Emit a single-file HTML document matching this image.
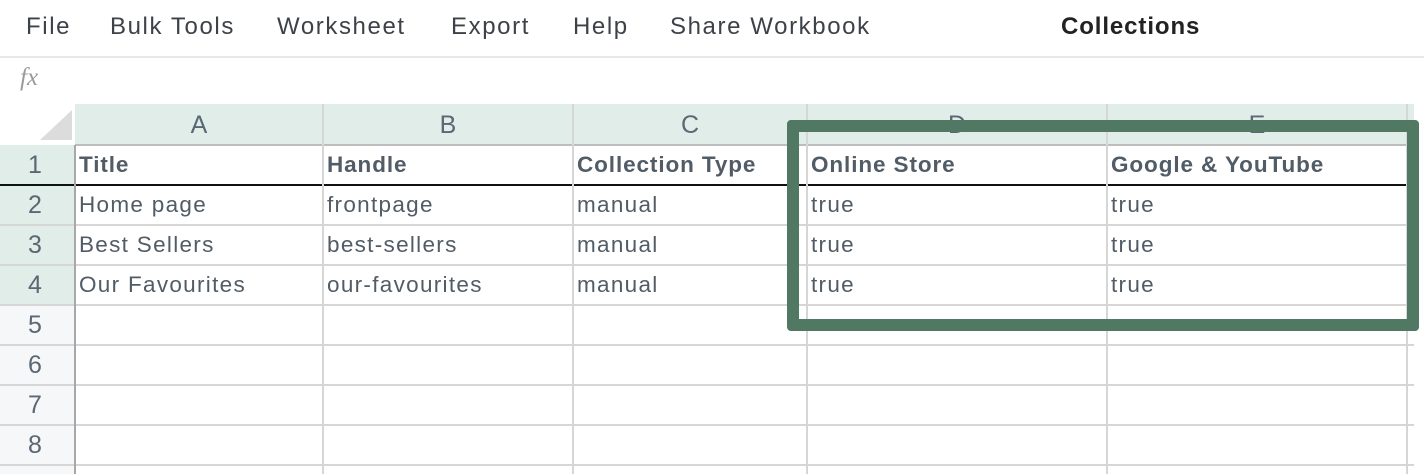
<!DOCTYPE html>
<html><head><style>
body{margin:0;width:1424px;height:474px;overflow:hidden;background:#fff;font-family:"Liberation Sans",sans-serif;position:relative}
.a{position:absolute;white-space:nowrap}
.m{top:12px;font-size:24px;color:#3d4249;line-height:30px;letter-spacing:1.6px}
.h{position:absolute;background:#d6d6d6;height:2px}
.v{position:absolute;background:#d6d6d6;width:2px}
.c{font-size:22.5px;color:#515c66;line-height:40px;letter-spacing:1.3px}
.b{font-weight:bold;letter-spacing:0.9px}
.rn{position:absolute;left:0;width:70px;text-align:center;font-size:25px;color:#5a6774;line-height:40px}
.cl{position:absolute;top:105px;text-align:center;font-size:25px;color:#5a6774;line-height:40px}
</style></head><body>
<div class="a m" style="left:26px">File</div>
<div class="a m" style="left:110px">Bulk Tools</div>
<div class="a m" style="left:277px">Worksheet</div>
<div class="a m" style="left:451px">Export</div>
<div class="a m" style="left:573px">Help</div>
<div class="a m" style="left:670px">Share Workbook</div>
<div class="a m" style="left:1061px;color:#222;font-weight:bold;letter-spacing:0.9px">Collections</div>
<div class="a" style="left:0;top:56px;width:1424px;height:2px;background:#e8e8ec"></div>
<div class="a" style="left:20px;top:64px;font-family:'Liberation Serif',serif;font-style:italic;font-size:25px;color:#9a9a9a">fx</div>
<div class="a" style="left:0;top:104px;width:1414px;height:41px;background:#e1ede8"></div>
<div class="a" style="left:0;top:104px;width:75px;height:41px;background:#fff"></div>
<div class="a" style="left:0;top:145px;width:74px;height:160px;background:#e1ede8"></div>
<div class="a" style="left:0;top:305px;width:74px;height:169px;background:#f5f7f9"></div>
<svg class="a" style="left:40px;top:110px" width="32" height="30"><polygon points="32,0 32,30 0,30" fill="#dcdcdc"/></svg>
<div class="cl" style="left:75px;width:248px">A</div>
<div class="cl" style="left:323px;width:250px">B</div>
<div class="cl" style="left:573px;width:234px">C</div>
<div class="cl" style="left:807px;width:300px">D</div>
<div class="cl" style="left:1107px;width:300px">E</div>
<div class="h" style="left:75px;top:144px;width:1340px;background:#bdbdbd"></div>
<div class="a" style="left:0;top:184px;width:1414px;height:2px;background:#111"></div>
<div class="h" style="left:0;top:224px;width:1414px"></div>
<div class="h" style="left:0;top:264px;width:1414px"></div>
<div class="h" style="left:0;top:304px;width:1414px"></div>
<div class="h" style="left:0;top:344px;width:1414px"></div>
<div class="h" style="left:0;top:384px;width:1414px"></div>
<div class="h" style="left:0;top:424px;width:1414px"></div>
<div class="h" style="left:0;top:464px;width:1414px"></div>
<div class="v" style="left:74px;top:145px;height:329px;background:#a8a8a8"></div>
<div class="v" style="left:322px;top:104px;height:370px"></div>
<div class="v" style="left:572px;top:104px;height:370px"></div>
<div class="v" style="left:806px;top:104px;height:370px"></div>
<div class="v" style="left:1106px;top:104px;height:370px"></div>
<div class="v" style="left:1406px;top:104px;height:370px"></div>
<div class="rn" style="top:145px">1</div>
<div class="rn" style="top:185px">2</div>
<div class="rn" style="top:225px">3</div>
<div class="rn" style="top:265px">4</div>
<div class="rn" style="top:305px">5</div>
<div class="rn" style="top:345px">6</div>
<div class="rn" style="top:385px">7</div>
<div class="rn" style="top:425px">8</div>
<div class="a c b" style="left:79px;top:145px">Title</div>
<div class="a c b" style="left:327px;top:145px">Handle</div>
<div class="a c b" style="left:577px;top:145px">Collection Type</div>
<div class="a c b" style="left:811px;top:145px">Online Store</div>
<div class="a c b" style="left:1111px;top:145px">Google &amp; YouTube</div>
<div class="a c" style="left:79px;top:185px">Home page</div>
<div class="a c" style="left:327px;top:185px">frontpage</div>
<div class="a c" style="left:577px;top:185px">manual</div>
<div class="a c" style="left:811px;top:185px">true</div>
<div class="a c" style="left:1111px;top:185px">true</div>
<div class="a c" style="left:79px;top:225px">Best Sellers</div>
<div class="a c" style="left:327px;top:225px">best-sellers</div>
<div class="a c" style="left:577px;top:225px">manual</div>
<div class="a c" style="left:811px;top:225px">true</div>
<div class="a c" style="left:1111px;top:225px">true</div>
<div class="a c" style="left:79px;top:265px">Our Favourites</div>
<div class="a c" style="left:327px;top:265px">our-favourites</div>
<div class="a c" style="left:577px;top:265px">manual</div>
<div class="a c" style="left:811px;top:265px">true</div>
<div class="a c" style="left:1111px;top:265px">true</div>
<div class="a" style="left:787px;top:120px;width:608px;height:187px;border:12px solid #517862;border-radius:4px"></div>
</body></html>
